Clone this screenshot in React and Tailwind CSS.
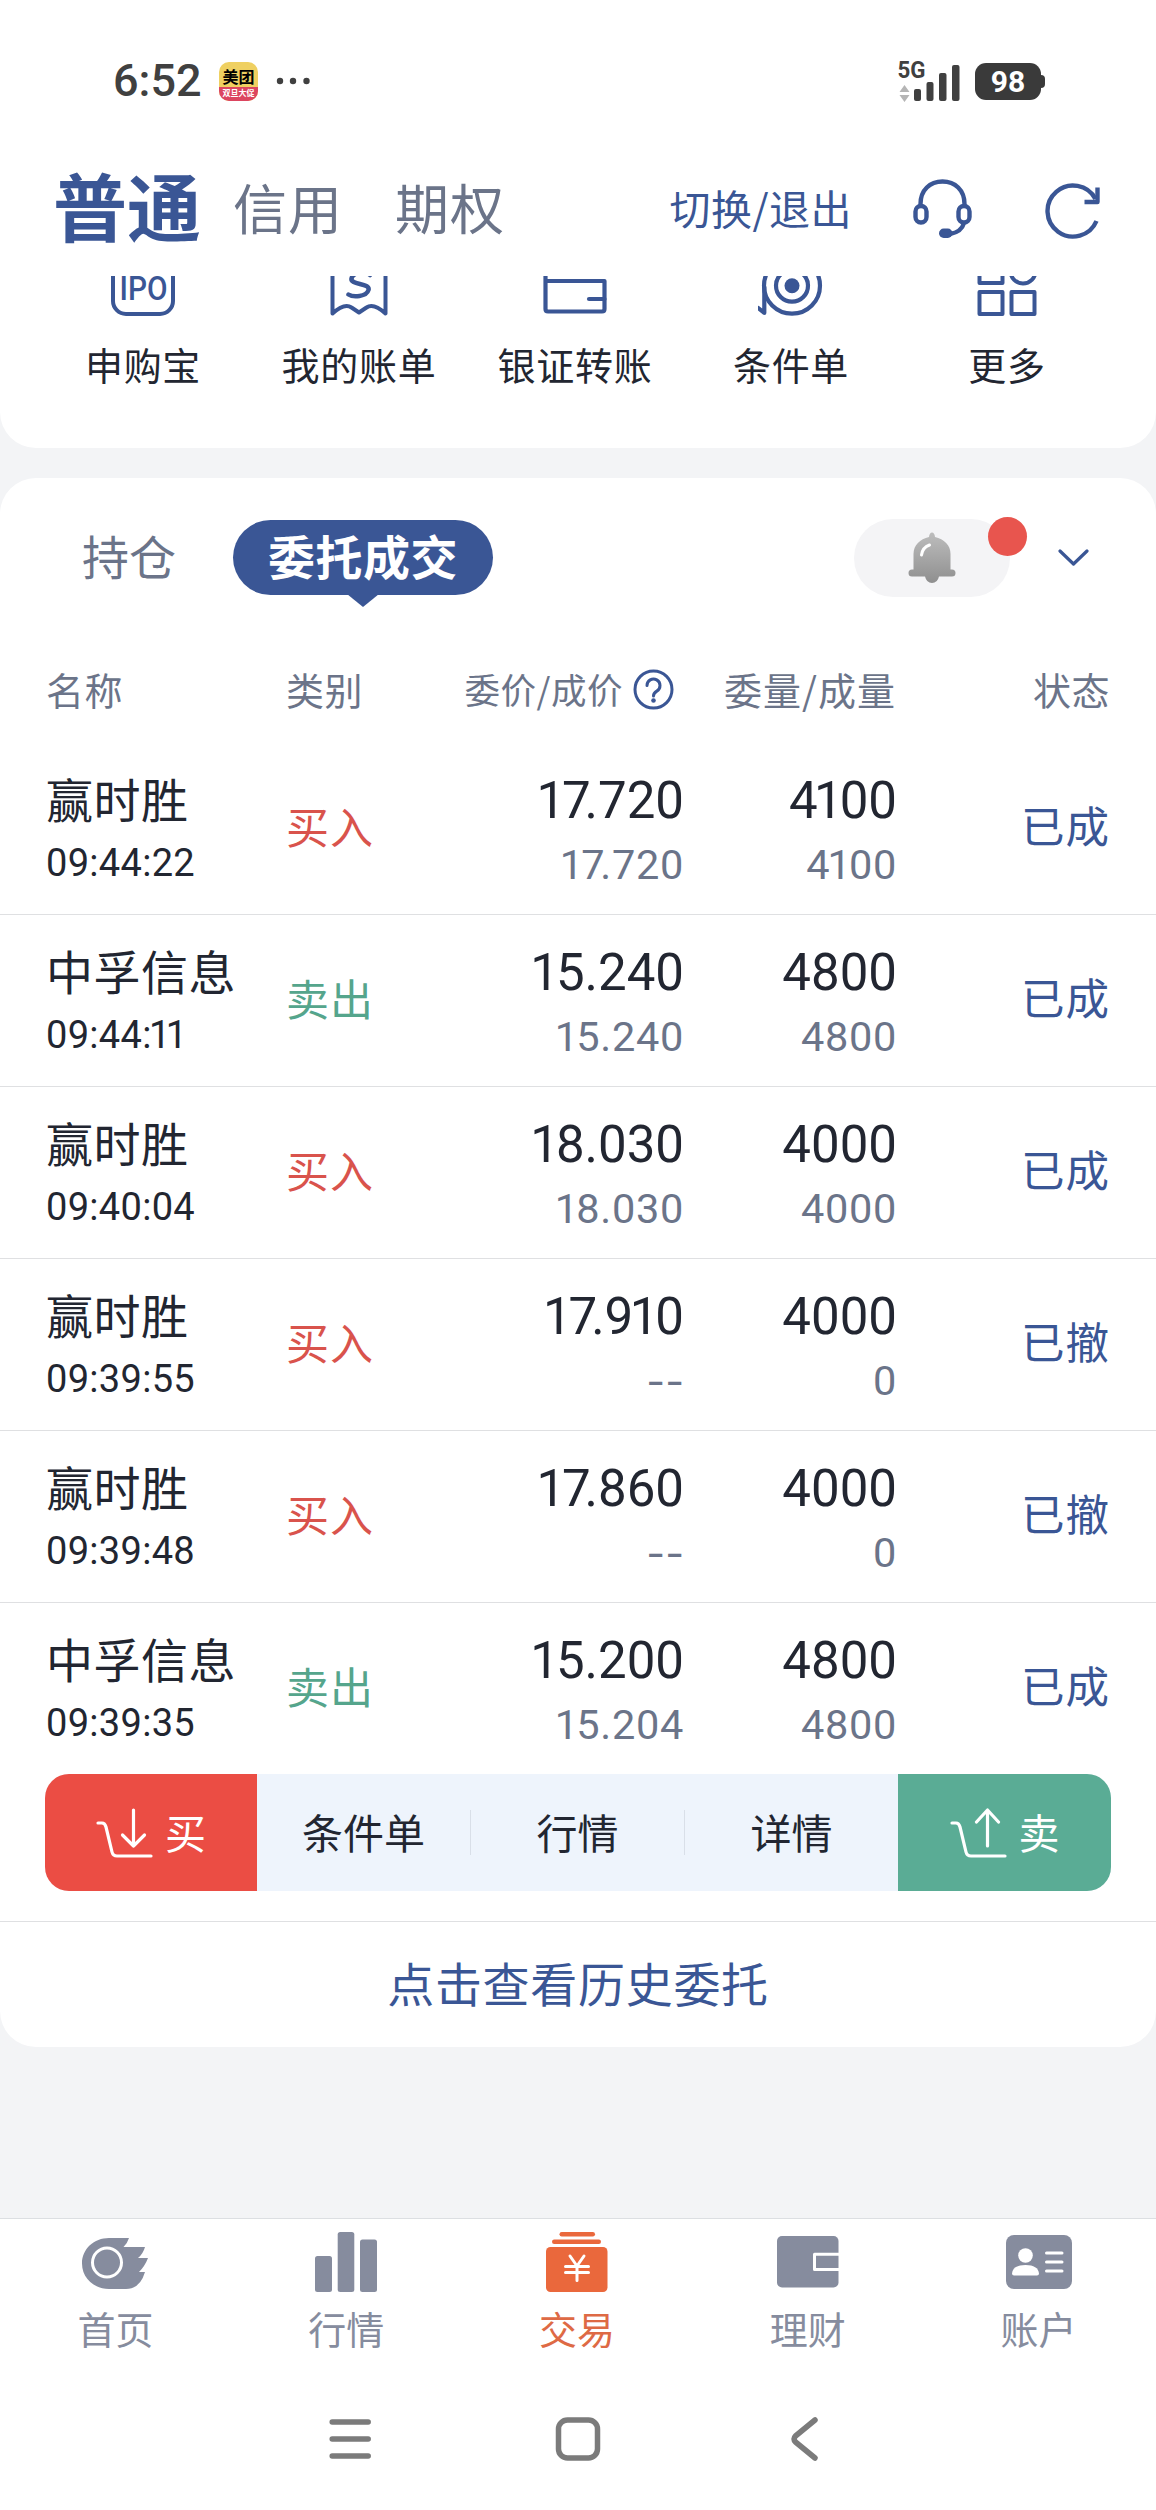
import React, { useState } from 'react';
import clsx from 'clsx';

const orders = [
  { name: '赢时胜', time: '09:44:22', side: 'buy', price: '17.720', dealPrice: '17.720', qty: '4100', dealQty: '4100', status: '已成' },
  { name: '中孚信息', time: '09:44:11', side: 'sell', price: '15.240', dealPrice: '15.240', qty: '4800', dealQty: '4800', status: '已成' },
  { name: '赢时胜', time: '09:40:04', side: 'buy', price: '18.030', dealPrice: '18.030', qty: '4000', dealQty: '4000', status: '已成' },
  { name: '赢时胜', time: '09:39:55', side: 'buy', price: '17.910', dealPrice: '--', qty: '4000', dealQty: '0', status: '已撤' },
  { name: '赢时胜', time: '09:39:48', side: 'buy', price: '17.860', dealPrice: '--', qty: '4000', dealQty: '0', status: '已撤' },
  { name: '中孚信息', time: '09:39:35', side: 'sell', price: '15.200', dealPrice: '15.204', qty: '4800', dealQty: '4800', status: '已成' },
];

/* ---------- shortcut icons (their upper part is scrolled under the header) ---------- */

const IpoIcon = () => (
  <svg width="64" height="64" viewBox="0 0 64 64" fill="none" stroke="#3a5695" strokeWidth="4">
    <rect x="2" y="2" width="60" height="60" rx="13" />
    <text x="32.5" y="48" textAnchor="middle" textLength="48" lengthAdjust="spacingAndGlyphs" fill="#3a5695" stroke="none" fontSize="34" fontWeight="500" fontFamily="Roboto, sans-serif">IPO</text>
  </svg>
);

const BillIcon = () => (
  <svg width="64" height="66" viewBox="0 0 64 66" fill="none" stroke="#3a5695" strokeWidth="4" strokeLinecap="round" strokeLinejoin="round">
    <path d="M5.5 4v59.5q12-11 19-6l7.5 5 7.5-5q7-5 19 6V4z" />
    <path d="M43 25c-5-4-17-3-18.500 3.500S43.500 33 41.500 40 26 47.500 21.500 44.500" strokeWidth="4.500" />
  </svg>
);

const TransferIcon = () => (
  <svg width="64" height="64" viewBox="0 0 64 64" fill="none" stroke="#3a5695" strokeWidth="4.200" strokeLinejoin="round" strokeLinecap="round">
    <path d="M2.500 29h59v28q0 2.500-2.500 2.500H5q-2.500 0-2.500-2.500V15q0-3 3-3h53" />
    <path d="M61.500 47H46" />
  </svg>
);

const TargetIcon = () => (
  <svg width="66" height="68" viewBox="0 0 66 68" fill="none" stroke="#3a5695" strokeWidth="4.200" strokeLinecap="round" strokeLinejoin="round">
    <circle cx="34" cy="37.700" r="28" />
    <circle cx="34" cy="37.700" r="16" />
    <circle cx="34" cy="37.700" r="7.500" fill="#3a5695" stroke="none" />
    <path d="M6.300 39v26l-6-5" />
  </svg>
);

const MoreIcon = () => (
  <svg width="60" height="64" viewBox="0 0 60 64" fill="none" stroke="#3a5695" strokeWidth="4" strokeLinejoin="round">
    <rect x="2.500" y="8" width="23" height="23" />
    <circle cx="46" cy="19" r="12.500" />
    <rect x="2.500" y="40" width="23" height="22" />
    <rect x="34.500" y="40" width="23" height="22" />
  </svg>
);

const shortcuts = [
  { label: '申购宝', icon: IpoIcon },
  { label: '我的账单', icon: BillIcon },
  { label: '银证转账', icon: TransferIcon },
  { label: '条件单', icon: TargetIcon },
  { label: '更多', icon: MoreIcon },
];

/* ---------- tab bar icons ---------- */

const HomeIcon = () => (
  <svg width="66" height="60" viewBox="0 0 66 60">
    <path fill="#868c9e" d="M27 6H47Q45.500 11 41.500 15H63Q61 22 56 26H66Q63 34 57 40H63Q58 57 44 57H27C12 57 0 46 0 31.500S12 6 27 6Z" />
    <circle cx="25" cy="30.500" r="14.500" fill="none" stroke="#fff" strokeWidth="3" />
  </svg>
);

const MarketIcon = () => (
  <svg width="62" height="60" viewBox="0 0 62 60" fill="#868c9e">
    <rect x="0" y="24" width="17" height="36" rx="2.500" />
    <rect x="22.700" y="0" width="16.600" height="60" rx="2.500" />
    <rect x="45" y="7.500" width="17" height="52.500" rx="2.500" />
  </svg>
);

const TradeIcon = () => (
  <svg width="62" height="60" viewBox="0 0 62 60" fill="#ea683c">
    <rect x="13.500" y="0" width="35.500" height="4.500" rx="2.200" />
    <rect x="6" y="7.500" width="49" height="4.500" rx="2.200" />
    <rect x="0" y="15" width="61.500" height="45" rx="4.500" />
    <path d="M24 24l7 10 7-10M19.500 34.500h23M19.500 40.500h23M31 34v14.500" fill="none" stroke="#fff" strokeWidth="3" strokeLinecap="round" />
  </svg>
);

const WealthIcon = () => (
  <svg width="62" height="60" viewBox="0 0 62 60">
    <rect x="0" y="4" width="61.500" height="51.500" rx="5" fill="#868c9e" />
    <path d="M62 22.200H37.500v15.300H62" fill="none" stroke="#fff" strokeWidth="3" strokeLinejoin="round" />
  </svg>
);

const AccountIcon = () => (
  <svg width="66" height="60" viewBox="0 0 66 60">
    <rect x="0" y="3" width="66" height="54" rx="8" fill="#868c9e" />
    <circle cx="19.500" cy="23.500" r="7.300" fill="#fff" />
    <path d="M6 41.500q1-8.500 13.500-8.500T33 41.500q0 2-2 2H8q-2 0-2-2Z" fill="#fff" />
    <path d="M40.500 21H56M40.500 30H56M40.500 39H56" stroke="#fff" strokeWidth="3" strokeLinecap="round" />
  </svg>
);

const tabs = [
  { id: 'home', label: '首页', icon: HomeIcon },
  { id: 'market', label: '行情', icon: MarketIcon },
  { id: 'trade', label: '交易', icon: TradeIcon },
  { id: 'wealth', label: '理财', icon: WealthIcon },
  { id: 'account', label: '账户', icon: AccountIcon },
];

const CartIcon = ({ up }) => (
  <svg width="58" height="50" viewBox="0 0 58 50" fill="none" stroke="#fff" strokeWidth="3.200" strokeLinecap="round" strokeLinejoin="round">
    <path d="M2 15h4q3 0 4 4l6 25q1 4 5 4h34" />
    <path d={up ? 'M37.500 38V2M26.500 14l11-12 11 12' : 'M37.500 2v36M26.500 27l11 11 11-11'} />
  </svg>
);

// Roboto's figures are tabular, so pull in the narrow "1" and the "7." pair
const Num = ({ value }) =>
  value.split(/(1|7(?=\.))/).filter(Boolean).map((part, i) => {
    if (part === '1') return <span key={i} className="-ml-[0.07em] -mr-[0.06em]">1</span>;
    if (part === '7') return <span key={i} className="-mr-[0.12em]">7</span>;
    return <span key={i}>{part}</span>;
  });

const StatusBar = () => (
  <div className="h-[162px] flex items-center justify-between pl-[113px] pr-[111px]">
    <div className="flex items-center">
      <span className="w-[106px] font-[Roboto] font-medium text-[45px] leading-[54px] text-[#404040]">6:52</span>
      <div className="w-[39px] h-[39px] rounded-[10px] overflow-hidden bg-[#efd061] flex flex-col items-center">
        <span className="h-[25px] pt-[3px] text-[16px] leading-[22px] font-bold text-black">美团</span>
        <span className="w-full h-[14px] bg-[#dc4560] text-center text-[8px] leading-[12px] font-bold text-white">双旦大促</span>
      </div>
      <svg className="ml-[18px]" width="34" height="8" viewBox="0 0 34 8" fill="#404040">
        <circle cx="4" cy="4" r="3.200" />
        <circle cx="17" cy="4" r="3.200" />
        <circle cx="30.500" cy="4" r="3.200" />
      </svg>
    </div>
    <div className="flex items-center gap-[14px]">
      <svg width="64" height="56" viewBox="0 -6 64 56" fill="#404040">
        <text x="0.500" y="19" fontSize="24" fontWeight="700" fontFamily="Roboto, sans-serif" textLength="28" lengthAdjust="spacingAndGlyphs">5G</text>
        <path d="M2.500 33l5-7 5 7zM2.500 36h10l-5 7z" fill="#b5b5b5" />
        <rect x="17" y="30" width="7" height="12" rx="2" />
        <rect x="29.500" y="23" width="7" height="19" rx="2" />
        <rect x="42" y="14" width="7.500" height="28" rx="2" />
        <rect x="55" y="6" width="7.500" height="36" rx="2" />
      </svg>
      <div className="flex items-center">
        <span className="w-[66px] h-[37px] rounded-[11px] bg-[#3a3a3a] text-white font-[Roboto] font-bold text-[30px] leading-[37px] text-center">98</span>
        <span className="w-1 h-[13px] rounded-r-[4px] bg-[#3a3a3a]" />
      </div>
    </div>
  </div>
);

const Header = () => (
  <header className="h-[114px] flex items-start pl-[53px] pr-[55px]">
    <h1 className="mt-[-12px] w-[180px] text-[74px] leading-[108px] font-bold text-[#3a5695]">普通</h1>
    <span className="w-[162px] text-[54px] leading-[90px] tracking-[1px] text-[#6b7489]">信用</span>
    <span className="text-[54px] leading-[90px] tracking-[1px] text-[#6b7489]">期权</span>
    <div className="flex-1 flex items-center justify-end">
      <span className="text-[41px] leading-[91px] tracking-[0.5px] text-[#3a5695]">切换/退出</span>
      <svg className="ml-[61px] mt-[2px]" width="60" height="60" viewBox="0 0 60 60" fill="none" stroke="#3a5695" strokeWidth="4.400">
        <path d="M7.500 28V25C7.500 11 17 2.500 29.500 2.500S51.500 11 51.500 25v3" />
        <rect x="2.500" y="27" width="11" height="16.500" rx="5.500" />
        <rect x="45.500" y="27" width="11" height="16.500" rx="5.500" />
        <path d="M51 44q-2.500 9-14 11" />
        <rect x="26" y="49.500" width="13.500" height="9.500" rx="4.700" fill="#3a5695" stroke="none" />
      </svg>
      <svg className="ml-[72px] mt-[2px]" width="56" height="60" viewBox="0 0 56 60" fill="none" stroke="#3a5695" strokeWidth="4.400" strokeLinejoin="round">
        <path d="M51.500 42A25.500 25.500 0 1 1 50.500 20" />
        <path d="M39.500 23H52.500V8.500" />
      </svg>
    </div>
  </header>
);

const Shortcuts = () => (
  <section className="h-[172px] bg-white rounded-b-[36px] overflow-hidden pl-[35px] pr-[41px] flex">
    {shortcuts.map(({ label, icon: Icon }) => (
      <div key={label} className="flex-1 flex flex-col items-center">
        <div className="h-[40px] w-full overflow-hidden flex items-end justify-center">
          <Icon />
        </div>
        <span className="mt-[20px] text-[38px] leading-[56px] tracking-[0.7px] text-[#222631] whitespace-nowrap">{label}</span>
      </div>
    ))}
  </section>
);

const OrderRow = ({ order, last }) => (
  <div className={clsx('h-[172px] pt-[26px] px-[46px] flex', !last && 'border-b border-[#dfe0e2]')}>
    <div className="w-[240px] text-[#222631]">
      <p className="text-[47px] leading-[57px] tracking-[0.5px]">{order.name}</p>
      <p className="pt-[4px] font-[Roboto] text-[38px] leading-[66px] tracking-[0.3px]"><Num value={order.time} /></p>
    </div>
    <p className={clsx('w-[140px] text-[43px] leading-[112px] tracking-[1px]', order.side === 'buy' ? 'text-[#d9534c]' : 'text-[#55a58c]')}>
      {order.side === 'buy' ? '买入' : '卖出'}
    </p>
    <div className="w-[258px] text-right font-[Roboto]">
      <p className="text-[51px] leading-[63px] text-[#222631]"><Num value={order.price} /></p>
      {order.dealPrice === '--' ? (
        <p className="font-[Inter] text-[41px] leading-[66px] text-[#6b7489]">--</p>
      ) : (
        <p className="text-[41.5px] leading-[66px] tracking-[0.7px] text-[#6b7489]"><Num value={order.dealPrice} /></p>
      )}
    </div>
    <div className="w-[213px] text-right font-[Roboto]">
      <p className="text-[51px] leading-[63px] text-[#222631]"><Num value={order.qty} /></p>
      <p className="text-[41.5px] leading-[66px] tracking-[0.7px] text-[#6b7489]"><Num value={order.dealQty} /></p>
    </div>
    <p className="flex-1 text-right text-[43.5px] leading-[112px] tracking-[1px] text-[#3a5695]">{order.status}</p>
  </div>
);

const OrdersCard = () => (
  <section className="mt-[30px] h-[1569px] bg-white rounded-[36px]">
    {/* Tabs */}
    <div className="h-[159px] pl-[82px] pr-[67px] flex items-center">
      <span className="w-[151px] pb-[6px] text-[47px] leading-[60px] text-[#6b7489]">持仓</span>
      <div className="relative w-[260px] h-[75px] rounded-full bg-[#3a5695] text-white text-center text-[47px] leading-[69px] font-bold tracking-[0.5px]">
        委托成交
        <svg className="absolute left-[114px] top-[74px]" width="32" height="13" viewBox="0 0 32 13">
          <path d="M0 0h32L16 13z" fill="#3a5695" />
        </svg>
      </div>
      <div className="relative ml-auto w-[156px] h-[78px] rounded-full bg-[#f4f4f6] flex items-center justify-center">
        <svg width="48" height="52" viewBox="0 0 48 52">
          <defs>
            <linearGradient id="bell" x1="0" y1="0" x2="0" y2="1">
              <stop offset="0" stopColor="#bdbdbd" />
              <stop offset="1" stopColor="#8f8f8f" />
            </linearGradient>
          </defs>
          <path fill="url(#bell)" d="M21 5q.500-4.500 3-4.500T27 5c9 2 15.500 8 15.500 17v15.500h1.500a3.500 3.500 0 0 1 0 7H31Q29.500 51 24 51T17 44.500H4a3.500 3.500 0 0 1 0-7H5.500V22C5.500 13 12 7 21 5Z" />
          <path d="M13.500 23q1-7.500 8-10" fill="none" stroke="#fff" strokeWidth="3" strokeLinecap="round" />
        </svg>
        <span className="absolute -right-[17px] -top-[2px] w-[39px] h-[39px] rounded-full bg-[#e8554e]" />
      </div>
      <svg className="ml-[48px]" width="31" height="18" viewBox="0 0 31 18" fill="none" stroke="#3a5695" strokeWidth="3.200" strokeLinecap="round" strokeLinejoin="round">
        <path d="M2 2l13.500 13L29 2" />
      </svg>
    </div>

    {/* Table head */}
    <div className="h-[106px] pb-[3px] px-[46px] flex items-center text-[38px] leading-[56px] tracking-[0.5px] text-[#6b7489]">
      <span className="w-[240px]">名称</span>
      <span className="w-[140px]">类别</span>
      <span className="w-[248px] flex items-center justify-end text-[35.5px]">
        委价/成价
        <svg className="mt-[2px] ml-[10px]" width="41" height="41" viewBox="0 0 41 41" fill="none" stroke="#3a5695" strokeWidth="3">
          <circle cx="20.500" cy="20.500" r="18.500" />
          <path d="M14 16.500a6.500 6.500 0 1 1 9.800 5.600Q20.500 24 20.500 27" strokeLinecap="round" />
          <circle cx="20.500" cy="31.500" r="2.300" fill="#3a5695" stroke="none" />
        </svg>
      </span>
      <span className="w-[222px] text-right tracking-[1px]">委量/成量</span>
      <span className="flex-1 text-right">状态</span>
    </div>

    {orders.map((order, i) => (
      <OrderRow key={order.time} order={order} last={i === orders.length - 1} />
    ))}

    {/* Actions for the selected order */}
    <div className="mt-[-1px] mx-[45px] h-[117px] rounded-[24px] overflow-hidden flex text-[41px] leading-[60px] text-[#222631] bg-[#eef4fc]">
      <button className="w-[212px] flex items-center justify-center gap-[11px] bg-[#eb4d44] text-white">
        <CartIcon />
        <span className="pb-[4px]">买</span>
      </button>
      <div className="w-[641px] flex items-center">
        <button className="flex-1 pb-[4px]">条件单</button>
        <span className="w-px h-[45px] bg-[#d9dfe8]" />
        <button className="flex-1 pb-[4px]">行情</button>
        <span className="w-px h-[45px] bg-[#d9dfe8]" />
        <button className="flex-1 pb-[4px]">详情</button>
      </div>
      <button className="flex-1 flex items-center justify-center gap-[11px] bg-[#5aac95] text-white">
        <CartIcon up />
        <span className="pb-[4px]">卖</span>
      </button>
    </div>

    <div className="mt-[30px] border-t border-[#dfe0e2] text-center text-[47px] leading-[119px] tracking-[0.7px] text-[#3a5695]">
      点击查看历史委托
    </div>
  </section>
);

const TabBar = () => {
  const [active, setActive] = useState('trade');

  return (
    <nav className="h-[152px] pt-[13px] pr-[2px] bg-white border-t border-[#dcdfe2] flex">
      {tabs.map(({ id, label, icon: Icon }) => (
        <button key={id} onClick={() => setActive(id)} className="flex-1 flex flex-col items-center">
          <Icon />
          <span className={clsx('mt-[8px] text-[38px] leading-[56px]', active === id ? 'text-[#de6a45]' : 'text-[#868c9e]')}>{label}</span>
        </button>
      ))}
    </nav>
  );
};

const SystemNav = () => (
  <div className="h-[140px] bg-white flex justify-center pt-[46px]">
    <svg width="500" height="46" viewBox="0 0 500 46" fill="none" stroke="#7b7b7b" strokeWidth="5.500" strokeLinecap="round" strokeLinejoin="round">
      <path d="M4.200 6H40.200M4.200 23H40.200M4.200 40H40.200" />
      <rect x="230.500" y="4" width="39" height="38" rx="9" />
      <path d="M487 4L467.500 20q-3 3 0 6l19.500 16" />
    </svg>
  </div>
);

export default function App() {
  return (
    <div className="w-[1156px] h-[2510px] overflow-hidden bg-[#f3f4f6] flex flex-col font-['Noto_Sans_CJK_SC',sans-serif]">
      <div className="bg-white">
        <StatusBar />
        <Header />
      </div>
      <Shortcuts />
      <OrdersCard />
      <div className="mt-auto">
        <TabBar />
        <SystemNav />
      </div>
    </div>
  );
}
